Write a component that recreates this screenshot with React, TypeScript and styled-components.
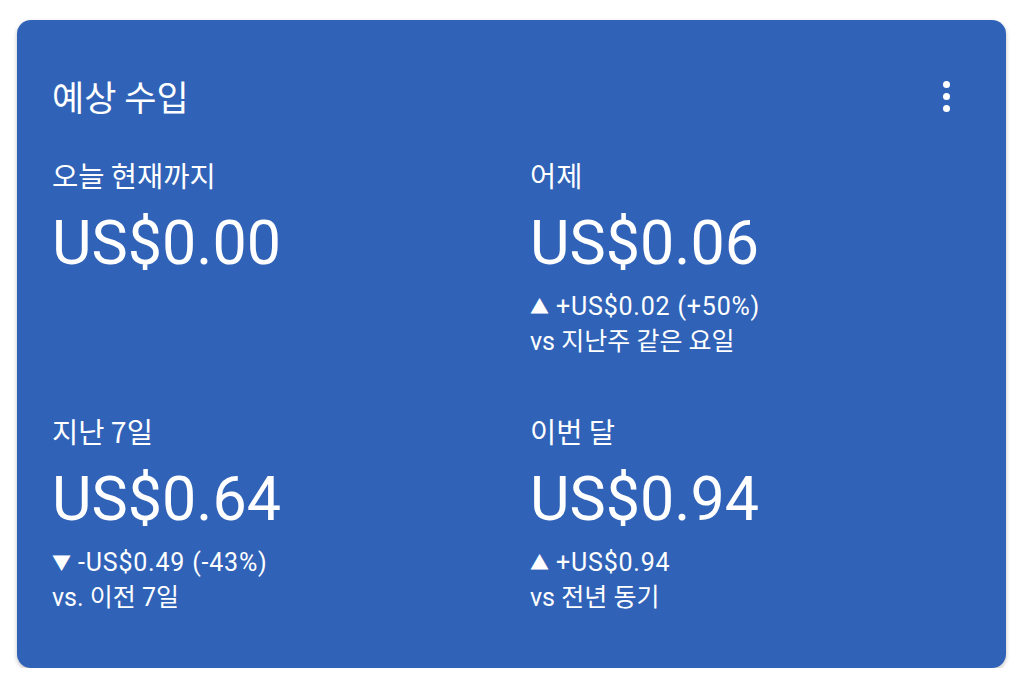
import React from "react";
import styled, { createGlobalStyle } from "styled-components";

const Global = createGlobalStyle`
  html, body { margin: 0; padding: 0; background: #ffffff; }
  body { font-family: Roboto, "Noto Sans CJK KR", sans-serif; }
`;

const Page = styled.div`
  padding: 20px 18px 0 17px;
`;

const Card = styled.div`
  background: #3063b8;
  border-radius: 14px;
  height: 648px;
  box-sizing: border-box;
  padding: 52px 35px 0 35px;
  color: #ffffff;
  box-shadow: 0 2px 4px rgba(0, 0, 0, 0.25);
`;

const Header = styled.div`
  display: flex;
  align-items: center;
  justify-content: space-between;
  height: 48px;
`;

const Title = styled.h1`
  margin: 0;
  font-family: "Noto Sans CJK KR", sans-serif;
  font-weight: 400;
  font-size: 35px;
  line-height: 48px;
`;

const MoreButton = styled.div`
  display: flex;
  flex-direction: column;
  gap: 5px;
  margin-right: 21px;
  span {
    width: 7px;
    height: 7px;
    border-radius: 50%;
    background: #ffffff;
  }
`;

const Grid = styled.div`
  display: grid;
  grid-template-columns: 478px 1fr;
  grid-auto-rows: 256px;
  margin-top: 37px;
`;

const Stat = styled.div`
  display: flex;
  flex-direction: column;
`;

const Label = styled.div`
  font-family: "Noto Sans CJK KR", sans-serif;
  font-size: 28.5px;
  line-height: 36px;
`;

const Value = styled.div`
  font-family: Roboto, sans-serif;
  font-size: 61px;
  line-height: 74px;
  margin-top: 13px;
`;

const Changes = styled.div`
  margin-top: 10px;
  display: flex;
  flex-direction: column;
`;

const Sub = styled.div<{ $spaced?: boolean }>`
  font-family: Roboto, "Noto Sans CJK KR", sans-serif;
  font-size: 25px;
  line-height: 34px;
  letter-spacing: ${(p) => (p.$spaced ? "0.8px" : "0")};
`;

const Arrow = styled.span`
  font-size: 19px;
  margin-right: 7px;
  vertical-align: 1px;
  letter-spacing: 0;
`;

type StatProps = {
  label: string;
  value: string;
  change?: string;
  dir?: "up" | "down";
  compare?: string;
};

function StatBlock({ label, value, change, dir, compare }: StatProps) {
  return (
    <Stat>
      <Label>{label}</Label>
      <Value>{value}</Value>
      {change && (
        <Changes>
          <Sub $spaced>
            <Arrow>{dir === "up" ? "▲" : "▼"}</Arrow>
            {change}
          </Sub>
          {compare && <Sub>{compare}</Sub>}
        </Changes>
      )}
    </Stat>
  );
}

export default function App() {
  return (
    <>
      <Global />
      <Page>
        <Card>
          <Header>
            <Title>예상 수입</Title>
            <MoreButton>
              <span />
              <span />
              <span />
            </MoreButton>
          </Header>
          <Grid>
            <StatBlock label="오늘 현재까지" value="US$0.00" />
            <StatBlock
              label="어제"
              value="US$0.06"
              change="+US$0.02 (+50%)"
              dir="up"
              compare="vs 지난주 같은 요일"
            />
            <StatBlock
              label="지난 7일"
              value="US$0.64"
              change="-US$0.49 (-43%)"
              dir="down"
              compare="vs. 이전 7일"
            />
            <StatBlock
              label="이번 달"
              value="US$0.94"
              change="+US$0.94"
              dir="up"
              compare="vs 전년 동기"
            />
          </Grid>
        </Card>
      </Page>
    </>
  );
}
